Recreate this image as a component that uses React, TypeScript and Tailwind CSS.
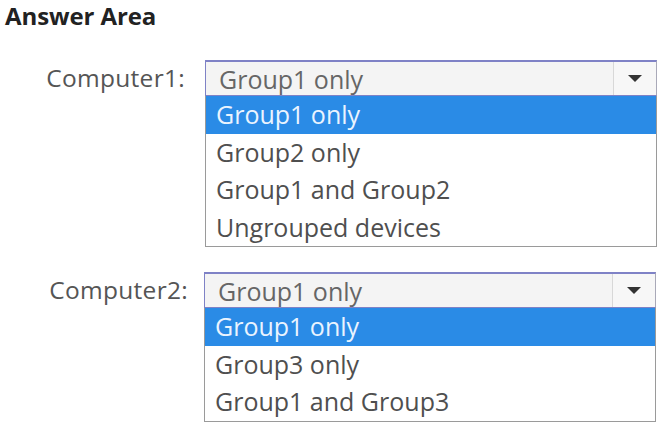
const font = "font-['Open_Sans','Noto_Sans',sans-serif]"

function Dropdown({ label, value, options, labelPad }: { label: string; value: string; options: string[]; labelPad: string }) {
  return (
    <div className="flex items-start">
      <div className={`w-[205px] shrink-0 pt-[1px] text-right text-[24.5px] leading-[34px] tracking-[0.3px] text-[#555] ${labelPad}`}>{label}</div>
      <div className="w-[452px]">
        <div className="flex h-[36px] border border-t-2 border-[#7f82c6] border-r-[#a9a9b8] bg-[#f4f4f4]">
          <div className="flex-1 pl-[13px] text-[25px] leading-[34px] text-[#666]">{value}</div>
          <div className="flex w-[43px] items-center justify-center border-l border-[#d8d8d8] bg-[#f7f7f7]">
            <svg width="16" height="9" viewBox="0 0 16 9">
              <path d="M1 1h14L8 8z" fill="#333" />
            </svg>
          </div>
        </div>
        <ul className="border border-t-0 border-[#9a9a9a] bg-white">
          {options.map((o, i) => (
            <li
              key={o}
              className={`h-[37.5px] pl-[10px] text-[25px] leading-[37px] ${i === 0 ? 'bg-[#2a8be6] text-[#eaf4ff]' : 'text-[#4f4f4f]'}`}
            >
              {o}
            </li>
          ))}
        </ul>
      </div>
    </div>
  )
}

export default function App() {
  return (
    <div className={`h-[426px] w-[662px] overflow-hidden bg-white ${font}`}>
      <h1 className="pl-[5px] text-[24px] font-bold leading-[32px] tracking-[-0.1px] text-[#222]">Answer Area</h1>
      <div className="mt-[28px]">
        <Dropdown
          label="Computer1:"
          value="Group1 only"
          options={['Group1 only', 'Group2 only', 'Group1 and Group2', 'Ungrouped devices']}
          labelPad="pr-[20px]"
        />
      </div>
      <div className="mt-[25px] -ml-[1px]">
        <Dropdown
          label="Computer2:"
          value="Group1 only"
          options={['Group1 only', 'Group3 only', 'Group1 and Group3']}
          labelPad="pr-[16px]"
        />
      </div>
    </div>
  )
}
